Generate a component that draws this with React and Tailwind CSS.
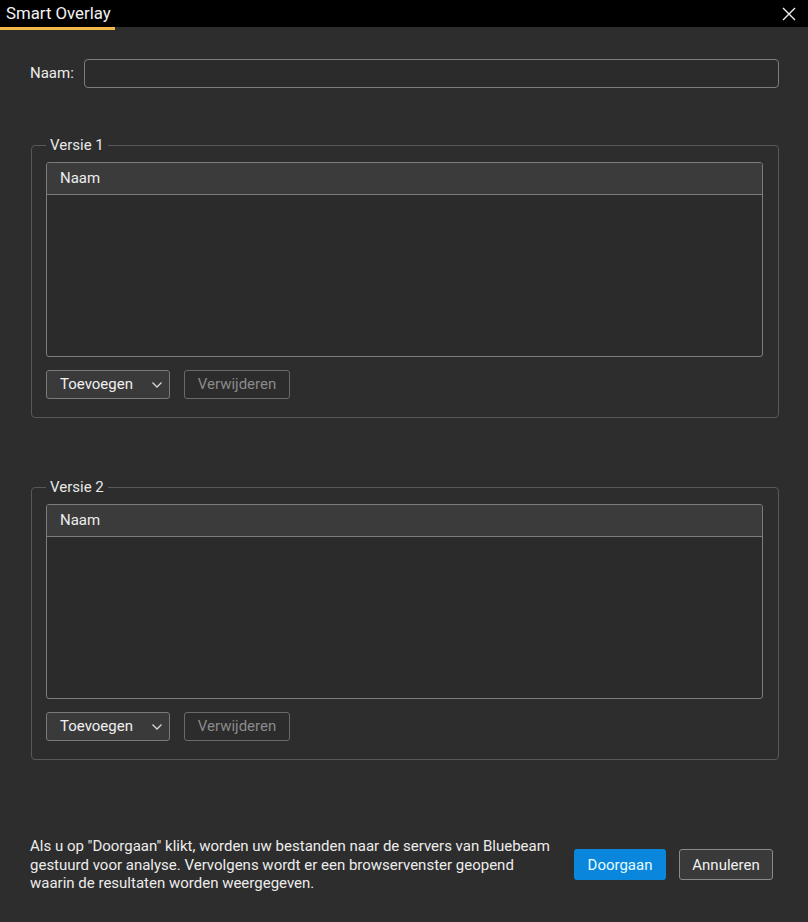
import React from "react";

function Fieldset({ title }) {
  return (
    <fieldset className="border border-[#585858] rounded-[4px] pl-[14px] pr-[15px] pt-[7px] pb-[18px] m-0 min-w-0">
      <legend className="px-[4px] ml-0 text-[15px] leading-[20px] text-[#e8e8e8]">{title}</legend>
      <div className="h-[195px] border border-[#7c7c7c] rounded-[3px] bg-[#2b2b2b] flex flex-col overflow-hidden">
        <div className="h-[32px] shrink-0 bg-[#3b3b3b] border-b border-[#7c7c7c] flex items-center pl-[13px] text-[15px] text-[#ececec]">
          Naam
        </div>
        <div className="flex-1" />
      </div>
      <div className="mt-[13px] flex gap-[14px]">
        <button className="w-[124px] h-[29px] rounded-[3px] border border-[#7a7a7a] bg-[#3a3a3a] flex items-center justify-between pl-[13px] pr-[6px] text-[15px] text-[#f0f0f0]">
          <span>Toevoegen</span>
          <svg width="12" height="8" viewBox="0 0 12 8" fill="none" stroke="#d8d8d8" strokeWidth="1.3">
            <path d="M1.5 1.5 L6 6 L10.5 1.5" />
          </svg>
        </button>
        <button className="w-[106px] h-[29px] rounded-[3px] border border-[#6a6a6a] bg-[#2c2c2c] text-[15px] text-[#8a8a8a] flex items-center justify-center">
          Verwijderen
        </button>
      </div>
    </fieldset>
  );
}

export default function App() {
  return (
    <div
      className="w-[808px] h-[922px] bg-[#2d2d2d] flex flex-col overflow-hidden"
      style={{ fontFamily: "Roboto, 'Liberation Sans', sans-serif" }}
    >
      <div className="relative h-[27px] bg-black shrink-0 flex items-center justify-between">
        <div className="relative h-full flex items-center pl-[6px] w-[115px] text-[16.8px] text-[#f2f2f2] whitespace-nowrap">
          Smart Overlay
          <div className="absolute left-0 top-[27px] w-[115px] h-[3px] bg-[#f2b94a]" />
        </div>
        <svg className="mr-[12px]" width="14" height="14" viewBox="0 0 14 14" stroke="#f0f0f0" strokeWidth="1.4">
          <path d="M1 1 L13 13 M13 1 L1 13" />
        </svg>
      </div>

      <div className="flex flex-col pl-[30px] pr-[29px] pt-[32px]">
        <div className="flex items-center">
          <span className="w-[54px] text-[15px] text-[#ececec]">Naam:</span>
          <div className="flex-1 h-[29px] rounded-[4px] border border-[#7c7c7c] bg-[#2b2b2b]" />
        </div>

        <div className="mt-[47px] ml-[1px]">
          <Fieldset title="Versie 1" />
        </div>
        <div className="mt-[59px] ml-[1px]">
          <Fieldset title="Versie 2" />
        </div>

        <div className="mt-[77px] flex items-center">
          <p className="w-[524px] shrink-0 text-[15px] leading-[18.5px] text-[#ececec]">
            Als u op "Doorgaan" klikt, worden uw bestanden naar de servers van Bluebeam gestuurd voor analyse. Vervolgens wordt er een browservenster geopend waarin de resultaten worden weergegeven.
          </p>
          <button className="ml-[20px] w-[92px] h-[31px] rounded-[3px] bg-[#0a87dc] text-[15px] text-[#e6fbff] flex items-center justify-center">
            Doorgaan
          </button>
          <button className="ml-[13px] w-[94px] h-[31px] rounded-[3px] border border-[#8a8a8a] bg-[#3a3a3a] text-[15px] text-[#f0f0f0] flex items-center justify-center">
            Annuleren
          </button>
        </div>
      </div>
    </div>
  );
}
